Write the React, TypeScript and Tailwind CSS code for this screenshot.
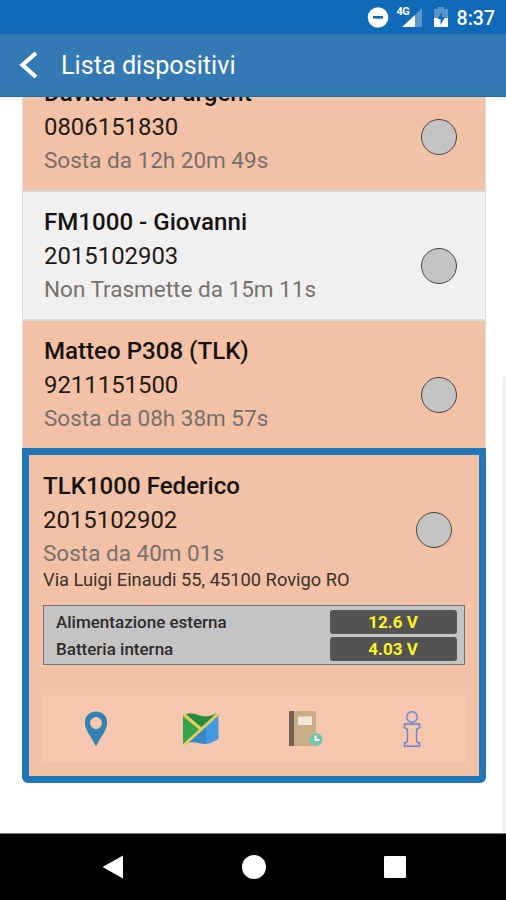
type Device = { name: string; serial: string; status: string; offline?: boolean };

const devices: Device[] = [
  { name: 'Davide Frosi argent', serial: '0806151830', status: 'Sosta da 12h 20m 49s' },
  { name: 'FM1000 - Giovanni', serial: '2015102903', status: 'Non Trasmette da 15m 11s', offline: true },
  { name: 'Matteo P308 (TLK)', serial: '9211151500', status: 'Sosta da 08h 38m 57s' },
];

const readings = [
  { label: 'Alimentazione esterna', value: '12.6 V' },
  { label: 'Batteria interna', value: '4.03 V' },
];

function StatusBar() {
  return (
    <div className="flex h-[34px] shrink-0 items-center justify-end bg-[#0f69b7] pr-[11px] text-white">
      <svg width="22" height="22" viewBox="0 0 22 22">
        <circle cx="11" cy="11.5" r="10.3" fill="#fff" />
        <rect x="6" y="10" width="10" height="2.6" fill="#0f69b7" />
      </svg>
      <div className="relative ml-[8px] h-[22px] w-[26px]">
        <span className="absolute left-0 top-0 text-[11px] leading-[11px] font-bold tracking-[-0.7px]">4G</span>
        <svg className="absolute left-0 top-0" width="26" height="22" viewBox="0 0 26 22">
          <path d="M18 9 25 2V21H18Z" fill="#5b96cb" />
          <path d="M5 21 18 9V21Z" fill="#fff" />
        </svg>
      </div>
      <svg className="ml-[11px]" width="14" height="22" viewBox="0 0 14 22">
        <path d="M4 1h6v2h4v9H0V3h4Z" fill="#5b96cb" />
        <path d="M0 12h14v9H0Z" fill="#fff" />
        <path d="M8 5.5 3.5 13H6.5V19L11 11H8Z" fill="#0f69b7" />
      </svg>
      <span className="ml-[9px] pt-[3px] text-[19.5px] leading-[34px] font-medium">8:37</span>
    </div>
  );
}

function Toggle() {
  return <div className="size-9 shrink-0 rounded-full border-[1.5px] border-[#4a433f] bg-[#c4c4c4]" />;
}

function DeviceInfo({ device }: { device: Device }) {
  return (
    <div className="whitespace-nowrap">
      <p className="text-[24.1px] leading-[34px] font-medium text-[#161413]">{device.name}</p>
      <p className="text-[23.9px] leading-[34px] text-[#1f1b19]">{device.serial}</p>
      <p className="text-[22.5px] leading-[32px] text-[#76706d]">{device.status}</p>
    </div>
  );
}

function DeviceRow({ device }: { device: Device }) {
  return (
    <li
      className={`flex h-[129.3px] items-start justify-between border-x border-t-2 border-x-[#dedede] border-t-[#dcdad9] pl-[21px] pr-[28px] pt-[13.4px] ${
        device.offline ? 'bg-[#f0f0f0]' : 'bg-[#f3c1a5]'
      }`}
    >
      <DeviceInfo device={device} />
      <div className="pt-[43px]">
        <Toggle />
      </div>
    </li>
  );
}

function PinIcon() {
  return (
    <svg width="24" height="36" viewBox="0 0 24 36">
      <path
        fillRule="evenodd"
        d="M12 .5C5.6.5.8 5.3.8 11.5.8 19.5 8 26.500 12 35.500 16 26.500 23.200 19.500 23.200 11.500 23.200 5.300 18.400.5 12 .5ZM12 6a6 6 0 1 1 0 12A6 6 0 0 1 12 6Z"
        fill="#3680b2"
      />
    </svg>
  );
}

function MapIcon() {
  return (
    <svg width="38" height="36" viewBox="0 0 38 36">
      <path d="M1 4 18 18 1 34Z" fill="#34a34b" />
      <path d="M4 3C10 1 14 4 20 5 25 6 29 5 35 2L18 18Z" fill="#288b41" />
      <path d="M36.500 3V28C31 31 27 33 23 33V14Z" fill="#4298df" />
      <path d="M24 13V33C17 33 12 30 6 32Z" fill="#3788cb" />
      <path d="m2 4 17 14M2 34 36 3" fill="none" stroke="#e2cf5c" strokeWidth="3" />
    </svg>
  );
}

function LogIcon() {
  return (
    <svg width="34" height="36" viewBox="0 0 34 36">
      <path d="M1 0h25a1 1 0 0 1 1 1v34H1a1 1 0 0 1-1-1V1a1 1 0 0 1 1-1Z" fill="#c8ad87" />
      <path d="M0 0h5v35H0Z" fill="#75604f" />
      <path d="M9 5.500h14v8.500H9Z" fill="#f0e9d8" />
      <circle cx="27" cy="28.500" r="6.500" fill="#70c4ac" />
      <path d="M26.500 24.500v4.500h4" fill="none" stroke="#eef8f0" strokeWidth="2" />
    </svg>
  );
}

function InfoIcon() {
  return (
    <svg width="18" height="36" viewBox="0 0 18 36" fill="none" stroke="#6d83d0" strokeWidth="1.400">
      <circle cx="9" cy="6" r="5.300" />
      <path d="M1.500 13h15v4c-2 0-3 1.500-3 3v9c0 1.500 1 3 3 3v3.300h-15V32c2 0 3-1.500 3-3v-9c0-1.500-1-3-3-3Z" />
    </svg>
  );
}

function SelectedDevice() {
  return (
    <li className="h-[335px] rounded-b-[6px] border-[7px] border-[#2176b8] bg-[#f3c1a5] px-[14px] pt-[14px]">
      <div className="flex h-[101px] items-start justify-between pr-[13px]">
        <DeviceInfo device={{ name: 'TLK1000 Federico', serial: '2015102902', status: 'Sosta da 40m 01s' }} />
        <div className="pt-[43px]">
          <Toggle />
        </div>
      </div>
      <p className="text-[18.3px] leading-[20px] whitespace-nowrap text-[#3b322d]">Via Luigi Einaudi 55, 45100 Rovigo RO</p>
      <div className="mt-[15px] flex h-[60px] flex-col gap-[3px] border border-[#77736f] bg-[#c4c4c4] pt-[4px] pl-[12px] pr-[7px]">
        {readings.map((reading) => (
          <div key={reading.label} className="flex h-[24px] items-center justify-between">
            <span className="text-[17px] leading-[24px] font-medium text-[#2d2c2c]">{reading.label}</span>
            <span className="h-[24px] w-[127px] rounded-[3px] bg-[#535353] text-center text-[17px] leading-[24px] font-bold text-[#fdf322]">
              {reading.value}
            </span>
          </div>
        ))}
      </div>
      <div className="mt-[30px] grid h-[67px] grid-cols-4 place-items-center bg-[#f5c7ae]">
        <PinIcon />
        <MapIcon />
        <LogIcon />
        <InfoIcon />
      </div>
    </li>
  );
}

export default function App() {
  return (
    <div className="flex h-[900px] w-[506px] flex-col overflow-hidden bg-white font-['Roboto',sans-serif]">
      <StatusBar />
      <header className="flex h-[63px] shrink-0 items-center border-b border-[#1d6faf] bg-[#337ab5] text-white">
        <svg className="ml-[18px]" width="20" height="28" viewBox="0 0 20 28">
          <path d="M18 2 4.500 14 18 26" fill="none" stroke="#fff" strokeWidth="4.200" />
        </svg>
        <h1 className="ml-[23px] pt-[2px] text-[25.2px] leading-[30px] whitespace-nowrap">Lista dispositivi</h1>
      </header>
      <main className="flex min-h-0 flex-1 justify-between overflow-hidden">
        <ul className="-mt-[36.600px] ml-[22px] w-[463.500px]">
          {devices.map((device) => (
            <DeviceRow key={device.serial} device={device} />
          ))}
          <SelectedDevice />
        </ul>
        <div className="mt-[280px] w-[4px] bg-[#f1f1f1]" />
      </main>
      <nav className="flex h-[67px] shrink-0 items-center border-t border-[#777] bg-black pl-[102px]">
        <svg width="22" height="26" viewBox="0 0 22 26">
          <path d="M.5 13 21 1.500V24.500Z" fill="#fff" />
        </svg>
        <span className="ml-[118px] size-6 rounded-full bg-white" />
        <span className="ml-[118px] size-[22px] rounded-[1px] bg-white" />
      </nav>
    </div>
  );
}
